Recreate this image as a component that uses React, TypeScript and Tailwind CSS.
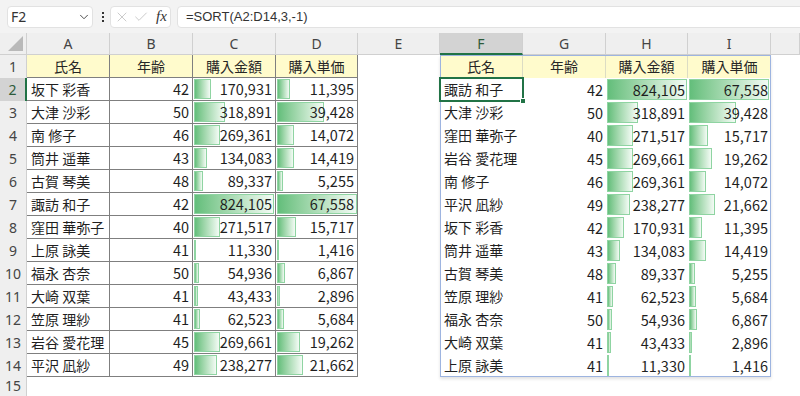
import React from 'react';
import { ChevronDown, X, Check } from 'lucide-react';

type Row = [string, number, number, number];

const source: Row[] = [
  ['坂下 彩香', 42, 170931, 11395],
  ['大津 沙彩', 50, 318891, 39428],
  ['南 修子', 46, 269361, 14072],
  ['筒井 遥華', 43, 134083, 14419],
  ['古賀 琴美', 48, 89337, 5255],
  ['諏訪 和子', 42, 824105, 67558],
  ['窪田 華弥子', 40, 271517, 15717],
  ['上原 詠美', 41, 11330, 1416],
  ['福永 杏奈', 50, 54936, 6867],
  ['大崎 双葉', 41, 43433, 2896],
  ['笠原 理紗', 41, 62523, 5684],
  ['岩谷 愛花理', 45, 269661, 19262],
  ['平沢 凪紗', 49, 238277, 21662],
];

// =SORT(A2:D14,3,-1)
const sorted = [...source].sort((a, b) => b[2] - a[2]);

const maxC = Math.max(...source.map(r => r[2]));
const maxD = Math.max(...source.map(r => r[3]));

const headers = ['氏名', '年齢', '購入金額', '購入単価'];
const letters = ['A', 'B', 'C', 'D', 'E', 'F', 'G', 'H', 'I', ''];

const fmt = (n: number) => n.toLocaleString('en-US');

const cellFont = { fontFamily: '"Noto Sans CJK JP", "Noto Sans", sans-serif' };
const uiFont = { fontFamily: '"Noto Sans", "Liberation Sans", sans-serif' };

const DataBar = ({ value, max }: { value: number; max: number }) => (
  <div
    className="absolute left-px top-px bottom-px border border-[#8fd4a2] bg-linear-to-r from-[#63be7b] to-[#f3fbf5]"
    style={{ width: Math.max(2, (value / max) * 80) }}
  />
);

const TableCell = ({ row, col, data, bordered }: { row: number; col: number; data: Row[]; bordered: boolean }) => {
  const edge = bordered ? 'border-r border-b border-[#7f7f7f]' : '';
  if (row === 1) {
    return (
      <div
        className={`flex items-center justify-center bg-[#fffbcc] text-[14px] text-[#262626] ${
          bordered ? edge : col < 3 ? 'border-r border-[#dcdcc4]' : ''
        }`}
      >
        {headers[col]}
      </div>
    );
  }
  const r = data[row - 2];
  if (col === 0) {
    return <div className={`flex items-center truncate bg-white pl-[4px] text-[14px] text-[#1f1f1f] ${edge}`}>{r[0]}</div>;
  }
  if (col === 1) {
    return <div className={`flex items-center justify-end bg-white pr-[3px] text-[14.5px] text-[#1f1f1f] ${edge}`}>{r[1]}</div>;
  }
  const value = col === 2 ? r[2] : r[3];
  const max = col === 2 ? maxC : maxD;
  return (
    <div className={`relative flex items-center justify-end bg-white pr-[3px] text-[14.5px] text-[#1f1f1f] ${edge}`}>
      <DataBar value={value} max={max} />
      <span className="relative">{fmt(value)}</span>
    </div>
  );
};

const RowHeader = ({ row }: { row: number }) => {
  if (row === 2) {
    return (
      <div className="flex items-center justify-center border-r-2 border-[#217346] bg-[#d3d3d3] text-[14px] text-[#2d5a3a]" style={uiFont}>
        {row}
      </div>
    );
  }
  if (row === 15) {
    return (
      <div className="flex items-start justify-center border-r border-[#d0d0d0] bg-[#efefef] text-[14px] leading-[18px] text-[#444]" style={uiFont}>
        {row}
      </div>
    );
  }
  return (
    <div className="flex items-center justify-center border-r border-[#d0d0d0] bg-[#efefef] text-[14px] text-[#444]" style={uiFont}>
      {row}
    </div>
  );
};

export default function App() {
  const rows = Array.from({ length: 15 }, (_, i) => i + 1);

  return (
    <div className="h-[396px] w-[800px] overflow-hidden bg-white">
      {/* formula bar */}
      <div className="flex h-[33px] items-center overflow-hidden bg-[#f3f3f3] pl-[7px]" style={uiFont}>
        <div className="flex h-[22px] w-[86px] items-center justify-between rounded-[4px] border border-[#e2e2e2] bg-white pl-[3px] pr-[1px] text-[14px] text-[#333]">
          <span>F2</span>
          <ChevronDown size={14} strokeWidth={1.6} className="text-[#444]" />
        </div>
        <div className="ml-[8px] flex w-[4px] flex-col items-center gap-[2px]">
          <span className="h-[2px] w-[2px] bg-[#333]" />
          <span className="h-[2px] w-[2px] bg-[#333]" />
          <span className="h-[2px] w-[2px] bg-[#333]" />
        </div>
        <div className="ml-[5px] flex h-[22px] w-[61px] items-center rounded-[4px] border border-[#e2e2e2] bg-white pl-[3px]">
          <X size={16} strokeWidth={1.1} className="text-[#b8b8b8]" />
          <Check size={16} strokeWidth={1.1} className="ml-[3px] text-[#b8b8b8]" />
          <span className="ml-[7px] text-[15px] italic text-[#333]" style={{ fontFamily: '"Liberation Serif", serif' }}>
            fx
          </span>
        </div>
        <div
          className="-mr-[6px] ml-[6px] flex h-[22px] flex-1 items-center rounded-[4px] border border-[#e2e2e2] bg-white pl-[8px] text-[13px] text-[#333]"
          style={{ fontFamily: '"Liberation Sans", sans-serif' }}
        >
          =SORT(A2:D14,3,-1)
        </div>
      </div>

      {/* sheet */}
      <div className="relative grid h-[363px] grid-cols-[27px_83px_83px_83px_82px_82px_83px_83px_82px_83px_1fr] grid-rows-[22px_repeat(14,23px)_19px]">
        <div className="relative border-r border-b border-[#d0d0d0] bg-[#efefef]">
          <svg className="absolute bottom-[3px] right-[3px]" width="15" height="15" viewBox="0 0 15 15">
            <polygon points="15,0 15,15 0,15" fill="#b9b9b9" />
          </svg>
        </div>
        {letters.map((l, i) =>
          l === 'F' ? (
            <div key={i} className="flex items-center justify-center border-r border-b-2 border-r-[#d0d0d0] border-b-[#217346] bg-[#d3d3d3] text-[14px] text-[#2d5a3a]" style={uiFont}>
              {l}
            </div>
          ) : (
            <div key={i} className="flex items-center justify-center border-r border-b border-[#d0d0d0] bg-[#efefef] text-[14px] text-[#444]" style={uiFont}>
              {l}
            </div>
          )
        )}

        {rows.map(row => (
          <React.Fragment key={row}>
            <RowHeader row={row} />
            {letters.map((_, c) => {
              const inRows = row <= 14;
              if (inRows && c <= 3) {
                return (
                  <div key={c} className="grid" style={cellFont}>
                    <TableCell row={row} col={c} data={source} bordered />
                  </div>
                );
              }
              if (inRows && c >= 5 && c <= 8) {
                return (
                  <div key={c} className="grid" style={cellFont}>
                    <TableCell row={row} col={c - 5} data={sorted} bordered={false} />
                  </div>
                );
              }
              return <div key={c} className="bg-white" />;
            })}
          </React.Fragment>
        ))}

        {/* spill range outline */}
        <div className="pointer-events-none absolute left-[440px] top-[22px] h-[322px] w-[331px] border border-[#9db4e0] shadow-[0_2px_3px_rgba(0,0,0,0.12)]" />
        {/* active cell F2 */}
        <div className="pointer-events-none absolute left-[439px] top-[44px] h-[25px] w-[85px] border-2 border-[#217346]">
          <span className="absolute -bottom-[4px] -right-[4px] h-[6px] w-[6px] border border-white bg-[#217346]" />
        </div>
      </div>
    </div>
  );
}
